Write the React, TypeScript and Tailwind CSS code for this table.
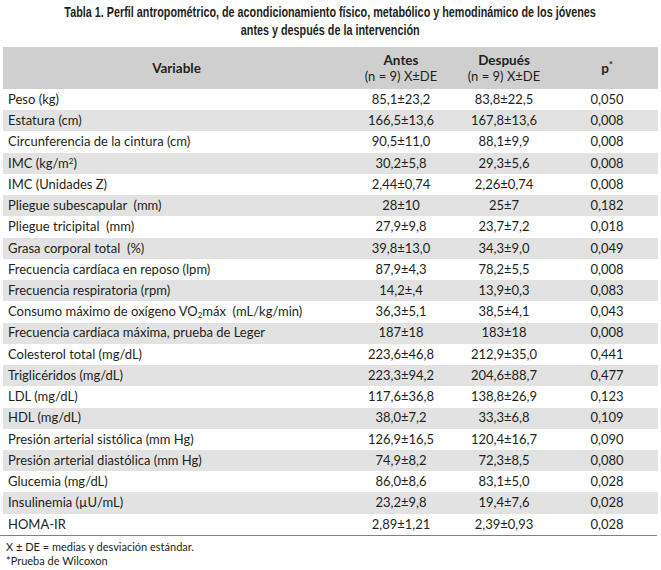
import React from "react";

type Row = {
  label: React.ReactNode;
  antes: string;
  despues: string;
  p: string;
};

const rows: Row[] = [
  { label: "Peso (kg)", antes: "85,1±23,2", despues: "83,8±22,5", p: "0,050" },
  { label: "Estatura (cm)", antes: "166,5±13,6", despues: "167,8±13,6", p: "0,008" },
  { label: "Circunferencia de la cintura (cm)", antes: "90,5±11,0", despues: "88,1±9,9", p: "0,008" },
  {
    label: (
      <>
        IMC (kg/m<sup className="text-[8px]">2</sup>)
      </>
    ),
    antes: "30,2±5,8",
    despues: "29,3±5,6",
    p: "0,008",
  },
  { label: "IMC (Unidades Z)", antes: "2,44±0,74", despues: "2,26±0,74", p: "0,008" },
  { label: "Pliegue subescapular  (mm)", antes: "28±10", despues: "25±7", p: "0,182" },
  { label: "Pliegue tricipital  (mm)", antes: "27,9±9,8", despues: "23,7±7,2", p: "0,018" },
  { label: "Grasa corporal total  (%)", antes: "39,8±13,0", despues: "34,3±9,0", p: "0,049" },
  { label: "Frecuencia cardíaca en reposo (lpm)", antes: "87,9±4,3", despues: "78,2±5,5", p: "0,008" },
  { label: "Frecuencia respiratoria (rpm)", antes: "14,2±,4", despues: "13,9±0,3", p: "0,083" },
  {
    label: (
      <>
        Consumo máximo de oxígeno VO<sub className="text-[8px]">2</sub>máx  (mL/kg/min)
      </>
    ),
    antes: "36,3±5,1",
    despues: "38,5±4,1",
    p: "0,043",
  },
  { label: "Frecuencia cardíaca máxima, prueba de Leger", antes: "187±18", despues: "183±18", p: "0,008" },
  { label: "Colesterol total (mg/dL)", antes: "223,6±46,8", despues: "212,9±35,0", p: "0,441" },
  { label: "Triglicéridos (mg/dL)", antes: "223,3±94,2", despues: "204,6±88,7", p: "0,477" },
  { label: "LDL (mg/dL)", antes: "117,6±36,8", despues: "138,8±26,9", p: "0,123" },
  { label: "HDL (mg/dL)", antes: "38,0±7,2", despues: "33,3±6,8", p: "0,109" },
  { label: "Presión arterial sistólica (mm Hg)", antes: "126,9±16,5", despues: "120,4±16,7", p: "0,090" },
  { label: "Presión arterial diastólica (mm Hg)", antes: "74,9±8,2", despues: "72,3±8,5", p: "0,080" },
  { label: "Glucemia (mg/dL)", antes: "86,0±8,6", despues: "83,1±5,0", p: "0,028" },
  { label: "Insulinemia (µU/mL)", antes: "23,2±9,8", despues: "19,4±7,6", p: "0,028" },
  { label: "HOMA-IR", antes: "2,89±1,21", despues: "2,39±0,93", p: "0,028" },
];

export default function App() {
  return (
    <div className="h-[570px] w-[661px] overflow-hidden bg-white text-[#231f20] font-['Lato','Open_Sans',sans-serif]">
      {/* condensed bold title: no condensed face installed, so squeeze horizontally */}
      <div className="flex h-[47px] flex-col items-center overflow-hidden pt-[3px] font-['Liberation_Sans',sans-serif] text-[15px] font-bold leading-[18px]">
        <div className="whitespace-nowrap scale-x-[0.72]">
          Tabla 1. Perfil antropométrico, de acondicionamiento físico, metabólico y hemodinámico de los jóvenes
        </div>
        <div className="whitespace-nowrap scale-x-[0.72]">antes y después de la intervención</div>
      </div>

      <div className="ml-[3px] w-[655px]">
        <div className="flex h-[42px] items-center bg-[#cfcfcf] text-[13.5px]">
          <div className="w-[347px] text-center font-bold">Variable</div>
          <div className="flex w-[102px] flex-col items-center leading-[16px]">
            <span className="font-bold">Antes</span>
            <span className="text-[13px]">(n = 9) X±DE</span>
          </div>
          <div className="flex w-[104px] flex-col items-center leading-[16px]">
            <span className="font-bold">Después</span>
            <span className="text-[13px]">(n = 9) X±DE</span>
          </div>
          <div className="flex-1 text-center font-bold">
            p<sup className="text-[9px]">*</sup>
          </div>
        </div>

        {rows.map((row, i) => (
          <div
            key={i}
            className={`flex h-[21.24px] items-center text-[13px] ${i % 2 === 1 ? "bg-[#e2e2e2]" : ""}`}
          >
            <div className="w-[347px] whitespace-pre pl-[5px]">{row.label}</div>
            <div className="w-[102px] text-center">{row.antes}</div>
            <div className="w-[104px] text-center">{row.despues}</div>
            <div className="flex-1 text-center">{row.p}</div>
          </div>
        ))}
      </div>

      <div className="w-[657px] border-t border-[#808080]" />

      <div className="pl-[6px] pt-[4px] text-[11px] leading-[14px]">
        <div>X ± DE = medias y desviación estándar.</div>
        <div>*Prueba de Wilcoxon</div>
      </div>
    </div>
  );
}
